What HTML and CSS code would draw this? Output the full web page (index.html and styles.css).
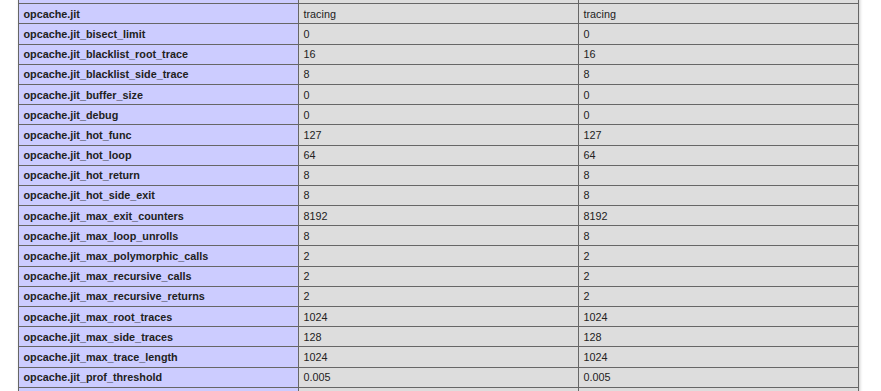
FILE: index.html
```html
<!DOCTYPE html>
<html>
<head>
<meta charset="utf-8">
<link rel="stylesheet" href="styles.css">
</head>
<body>
<div class="center">
<table>
<tr><td class="e">&nbsp;</td><td class="v">&nbsp;</td><td class="v">&nbsp;</td></tr>
<tr><td class="e">opcache.jit</td><td class="v">tracing</td><td class="v">tracing</td></tr>
<tr><td class="e">opcache.jit_bisect_limit</td><td class="v">0</td><td class="v">0</td></tr>
<tr><td class="e">opcache.jit_blacklist_root_trace</td><td class="v">16</td><td class="v">16</td></tr>
<tr><td class="e">opcache.jit_blacklist_side_trace</td><td class="v">8</td><td class="v">8</td></tr>
<tr><td class="e">opcache.jit_buffer_size</td><td class="v">0</td><td class="v">0</td></tr>
<tr><td class="e">opcache.jit_debug</td><td class="v">0</td><td class="v">0</td></tr>
<tr><td class="e">opcache.jit_hot_func</td><td class="v">127</td><td class="v">127</td></tr>
<tr><td class="e">opcache.jit_hot_loop</td><td class="v">64</td><td class="v">64</td></tr>
<tr><td class="e">opcache.jit_hot_return</td><td class="v">8</td><td class="v">8</td></tr>
<tr><td class="e">opcache.jit_hot_side_exit</td><td class="v">8</td><td class="v">8</td></tr>
<tr><td class="e">opcache.jit_max_exit_counters</td><td class="v">8192</td><td class="v">8192</td></tr>
<tr><td class="e">opcache.jit_max_loop_unrolls</td><td class="v">8</td><td class="v">8</td></tr>
<tr><td class="e">opcache.jit_max_polymorphic_calls</td><td class="v">2</td><td class="v">2</td></tr>
<tr><td class="e">opcache.jit_max_recursive_calls</td><td class="v">2</td><td class="v">2</td></tr>
<tr><td class="e">opcache.jit_max_recursive_returns</td><td class="v">2</td><td class="v">2</td></tr>
<tr><td class="e">opcache.jit_max_root_traces</td><td class="v">1024</td><td class="v">1024</td></tr>
<tr><td class="e">opcache.jit_max_side_traces</td><td class="v">128</td><td class="v">128</td></tr>
<tr><td class="e">opcache.jit_max_trace_length</td><td class="v">1024</td><td class="v">1024</td></tr>
<tr><td class="e">opcache.jit_prof_threshold</td><td class="v">0.005</td><td class="v">0.005</td></tr>
<tr><td class="e">&nbsp;</td><td class="v">&nbsp;</td><td class="v">&nbsp;</td></tr>
</table>
</div>
</body>
</html>
```
FILE: styles.css
```css
html, body {
  margin: 0;
  padding: 0;
  background: #fff;
  color: #222;
  font-family: "Liberation Sans", Arial, sans-serif;
}
.center {
  padding-left: 18px;
}
.center table {
  margin-top: -17px;
  border-collapse: collapse;
  border: 0;
  width: 841px;
  table-layout: fixed;
  box-shadow: 1px 2px 3px #ccc;
}
td {
  border: 1px solid #666;
  font-size: 10.8px;
  line-height: 12px;
  padding: 3.6px 4.5px;
  vertical-align: baseline;
  text-align: left;
  white-space: nowrap;
  overflow: hidden;
}
.e {
  background-color: #ccf;
  width: 270px;
  font-weight: bold;
}
.v {
  background-color: #ddd;
}
```
